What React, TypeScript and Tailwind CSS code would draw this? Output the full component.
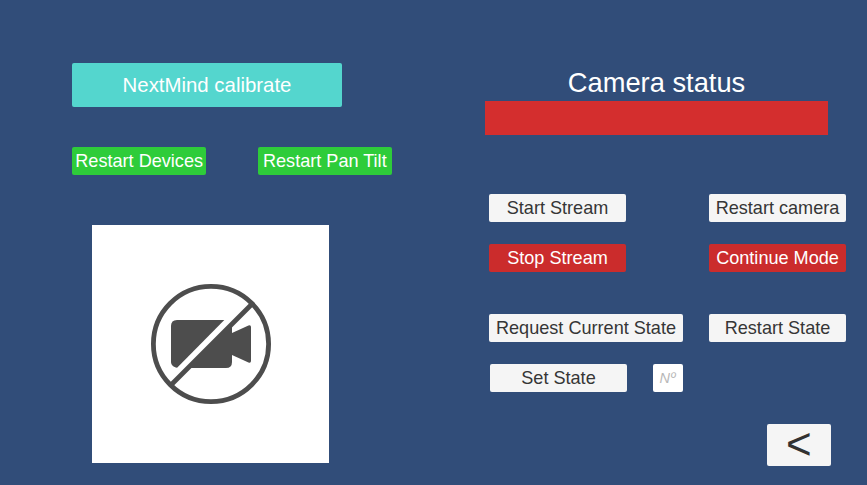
import type { ReactNode } from "react";

const tones = {
  light: "bg-[#f5f5f5] text-[#363636]",
  red: "bg-[#cb2c2c] text-white",
  green: "bg-[#2ecc3a] text-white",
};

function Button({
  tone = "light",
  className = "",
  children,
}: {
  tone?: keyof typeof tones;
  className?: string;
  children: ReactNode;
}) {
  return (
    <button
      className={`flex h-7 shrink-0 items-center justify-center rounded-[2px] text-[18.1px] leading-5 whitespace-nowrap ${tones[tone]} ${className}`}
    >
      {children}
    </button>
  );
}

function CameraOff() {
  return (
    <svg width="120" height="120" viewBox="0 0 120 120" fill="none">
      <g fill="#4d4d4d">
        <path d="M26 36H73.3L26.1 83.8C22.5 83.2 20 81 20 78V42Q20 36 26 36Z" />
        <path d="M81 41V78Q81 84 75 84H39Z" />
        <path d="M81 49 97.5 41.5Q100 40.8 100 43V77Q100 79.2 97.5 78.5L81 71Z" />
      </g>
      <path d="M19.5 101.5 101 20" stroke="#4d4d4d" strokeWidth="4.8" />
      <circle cx="60" cy="60" r="57.6" stroke="#4d4d4d" strokeWidth="4.8" />
    </svg>
  );
}

export default function App() {
  return (
    <main className="flex h-[485px] w-[867px] overflow-hidden bg-[#314d79] font-['Liberation_Sans',Arial,sans-serif]">
      <section className="w-[485px] pt-[62.5px] pl-[72px]">
        <button className="flex h-11 w-[270px] items-center justify-center rounded-[2px] bg-[#54d6ce] pt-px text-[20.4px] leading-none text-white">
          NextMind calibrate
        </button>
        <div className="mt-[40.5px] flex gap-[51.4px]">
          <Button tone="green" className="w-[134.3px]">Restart Devices</Button>
          <Button tone="green" className="w-[134.3px]">Restart Pan Tilt</Button>
        </div>
        <div className="mt-[50px] ml-[20.4px] flex h-[238px] w-[237px] items-center justify-center bg-white">
          <CameraOff />
        </div>
      </section>

      <section className="w-[382px] pt-[66px]">
        <h1 className="flex h-[35px] w-[343px] items-center justify-center pb-[2px] text-[27.3px] leading-none text-white">
          Camera status
        </h1>
        <div className="h-[33.5px] w-[343px] bg-[#d42e2e]" />
        <div className="mt-[59.3px] ml-1 flex w-[357px] justify-between">
          <Button className="w-[137px]">Start Stream</Button>
          <Button className="w-[137px]">Restart camera</Button>
        </div>
        <div className="mt-[22px] ml-1 flex w-[357px] justify-between">
          <Button tone="red" className="w-[137px]">Stop Stream</Button>
          <Button tone="red" className="w-[137px]">Continue Mode</Button>
        </div>
        <div className="mt-[42px] ml-1 flex w-[357px] justify-between">
          <Button className="w-[194px]">Request Current State</Button>
          <Button className="w-[137px]">Restart State</Button>
        </div>
        <div className="mt-[22.2px] ml-[5px] flex gap-[25.5px]">
          <Button className="w-[137px]">Set State</Button>
          <div className="flex h-7 w-[30.5px] items-center justify-center rounded-[2px] bg-white pt-px text-[14.5px] leading-none tracking-[0.3px] text-[#b8b8b8] italic">
            Nº
          </div>
        </div>
        <button className="mt-8 ml-[281.5px] flex h-[42px] w-[64.5px] items-center justify-center rounded-[2px] bg-[#f5f5f5] pb-px text-[44px] leading-none text-[#323232]">
          &lt;
        </button>
      </section>
    </main>
  );
}
